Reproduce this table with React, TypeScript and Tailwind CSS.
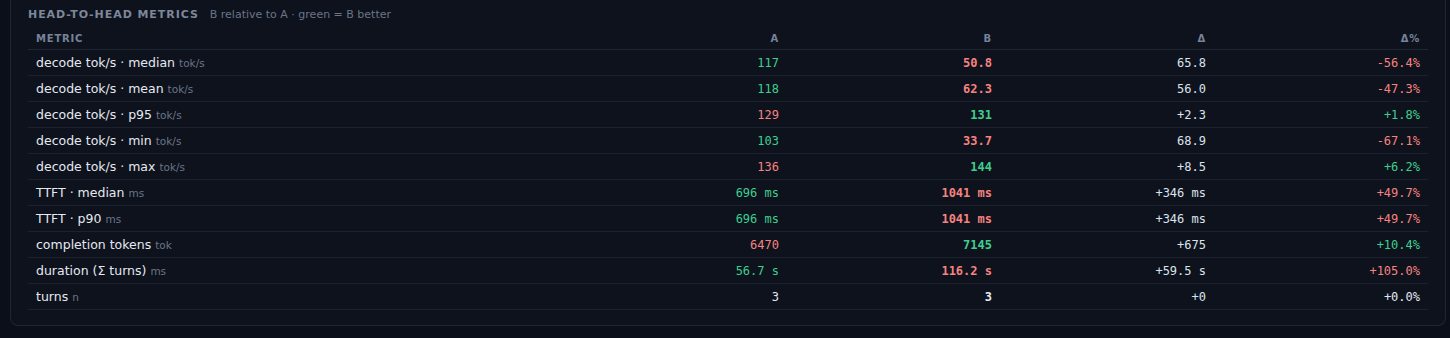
type Tone = "good" | "bad" | "plain";

type Row = {
  label: string;
  unit: string;
  a: string;
  aTone: Tone;
  b: string;
  bTone: Tone;
  d: string;
  pct: string;
  pctTone: Tone;
};

const rows: Row[] = [
  { label: "decode tok/s · median", unit: "tok/s", a: "117", aTone: "good", b: "50.8", bTone: "bad", d: "65.8", pct: "-56.4%", pctTone: "bad" },
  { label: "decode tok/s · mean", unit: "tok/s", a: "118", aTone: "good", b: "62.3", bTone: "bad", d: "56.0", pct: "-47.3%", pctTone: "bad" },
  { label: "decode tok/s · p95", unit: "tok/s", a: "129", aTone: "bad", b: "131", bTone: "good", d: "+2.3", pct: "+1.8%", pctTone: "good" },
  { label: "decode tok/s · min", unit: "tok/s", a: "103", aTone: "good", b: "33.7", bTone: "bad", d: "68.9", pct: "-67.1%", pctTone: "bad" },
  { label: "decode tok/s · max", unit: "tok/s", a: "136", aTone: "bad", b: "144", bTone: "good", d: "+8.5", pct: "+6.2%", pctTone: "good" },
  { label: "TTFT · median", unit: "ms", a: "696 ms", aTone: "good", b: "1041 ms", bTone: "bad", d: "+346 ms", pct: "+49.7%", pctTone: "bad" },
  { label: "TTFT · p90", unit: "ms", a: "696 ms", aTone: "good", b: "1041 ms", bTone: "bad", d: "+346 ms", pct: "+49.7%", pctTone: "bad" },
  { label: "completion tokens", unit: "tok", a: "6470", aTone: "bad", b: "7145", bTone: "good", d: "+675", pct: "+10.4%", pctTone: "good" },
  { label: "duration (Σ turns)", unit: "ms", a: "56.7 s", aTone: "good", b: "116.2 s", bTone: "bad", d: "+59.5 s", pct: "+105.0%", pctTone: "bad" },
  { label: "turns", unit: "n", a: "3", aTone: "plain", b: "3", bTone: "plain", d: "+0", pct: "+0.0%", pctTone: "plain" },
];

const toneClass: Record<Tone, string> = {
  good: "text-[#3ecf8e]",
  bad: "text-[#f7837f]",
  plain: "text-[#e2e8f0]",
};

const mono = "font-['DejaVu_Sans_Mono',monospace] text-[12px]";

export default function App() {
  return (
    <div className="min-h-[338px] bg-[#0b0f19] pl-[10px] pr-[4px] font-['DejaVu_Sans',sans-serif]">
      <div className="rounded-b-lg border-x border-b border-[#1f2633] bg-[#0d121d] px-[17px] pb-[15px] pt-[7px]">
        <div className="flex items-baseline gap-[11px]">
          <span className="text-[11px] font-bold uppercase tracking-[0.085em] text-[#7d8799]">
            Head-to-head metrics
          </span>
          <span className="text-[11px] text-[#6b7587]">B relative to A · green = B better</span>
        </div>
        <table className="mt-[4px] w-full table-fixed border-collapse">
          <colgroup>
            <col />
            <col className="w-[213px]" />
            <col className="w-[213px]" />
            <col className="w-[214px]" />
            <col className="w-[214px]" />
          </colgroup>
          <thead>
            <tr className="h-[22px] border-b border-[#1f2633] text-[10px] font-bold uppercase tracking-[0.08em] text-[#76839a]">
              <th className="px-2 text-left">Metric</th>
              <th className="px-2 text-right">A</th>
              <th className="px-2 text-right">B</th>
              <th className="px-2 text-right">Δ</th>
              <th className="px-2 text-right">Δ%</th>
            </tr>
          </thead>
          <tbody>
            {rows.map((r) => (
              <tr key={r.label} className="h-[26px] border-b border-[#1c222d]">
                <td className="px-2 pt-[1px] text-[12.5px] text-[#e5e9f0]">
                  {r.label} <span className="text-[10.5px] text-[#6b7587]">{r.unit}</span>
                </td>
                <td className={`px-2 text-right ${mono} ${toneClass[r.aTone]}`}>{r.a}</td>
                <td className={`px-2 text-right font-bold ${mono} ${toneClass[r.bTone]}`}>{r.b}</td>
                <td className={`px-2 text-right ${mono} text-[#dde3ec]`}>{r.d}</td>
                <td className={`px-2 text-right ${mono} ${toneClass[r.pctTone]}`}>{r.pct}</td>
              </tr>
            ))}
          </tbody>
        </table>
      </div>
    </div>
  );
}
